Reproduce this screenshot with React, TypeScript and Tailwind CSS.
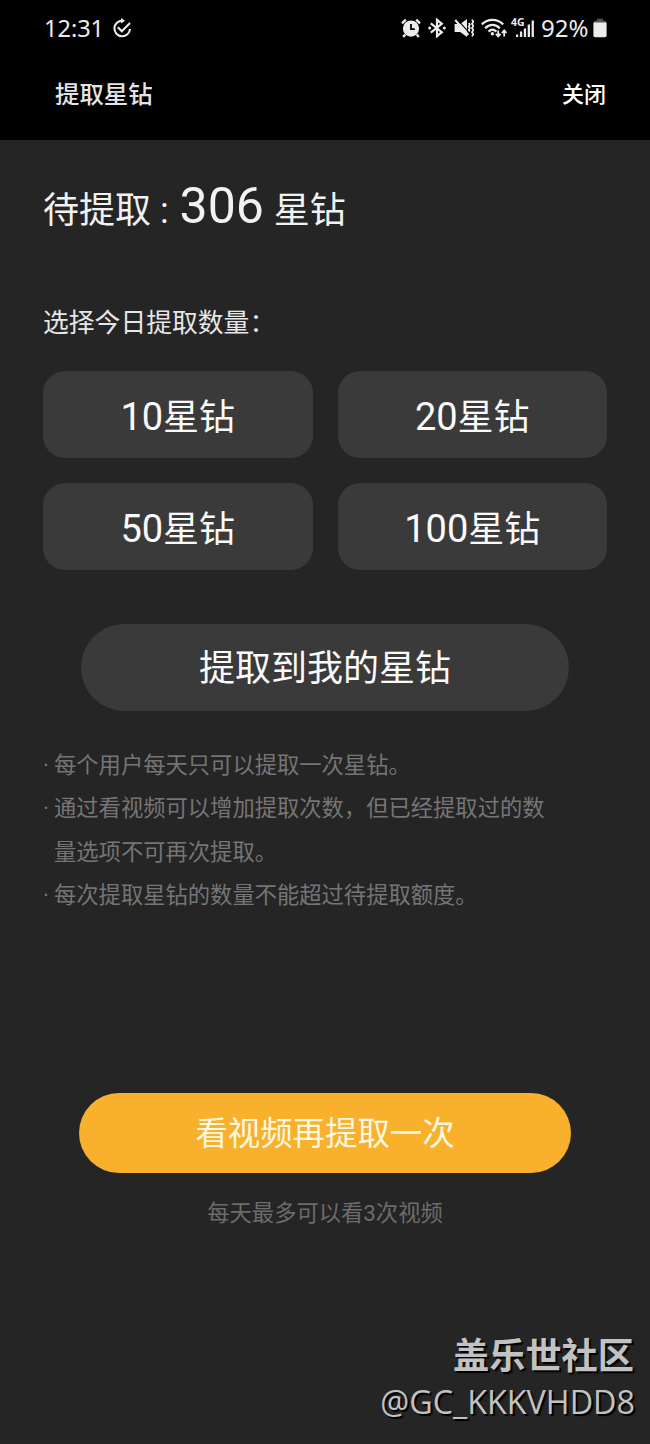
import { useState } from "react";

interface AmountButtonProps {
  amount: number;
  onClick: () => void;
}

const AMOUNTS = [10, 20, 50, 100];

const NOTES = [
  "每个用户每天只可以提取一次星钻。",
  "通过看视频可以增加提取次数，但已经提取过的数量选项不可再次提取。",
  "每次提取星钻的数量不能超过待提取额度。",
];

function SyncIcon() {
  return (
    <svg className="h-5 w-5" viewBox="0 0 20 20" fill="none" stroke="currentColor" strokeWidth={2.1}>
      <path d="M10.5 2.7A7.8 7.8 0 1 0 18 11" />
      <path d="M9 0l4 2.7L9 5.4z" fill="currentColor" stroke="none" />
      <path d="M5.8 9.2l4 4L18 5" />
    </svg>
  );
}

function AlarmIcon() {
  return (
    <svg className="h-5 w-5" viewBox="0 0 20 20">
      <circle cx="10" cy="10.6" r="8.1" fill="currentColor" />
      <path
        d="M1 5.4L4.8 1.6M19 5.4L15.2 1.6M4.2 16.4L2.2 19M15.8 16.4l2 2.6"
        stroke="currentColor"
        strokeWidth={2.4}
      />
      <path d="M10 6v5.2h3.8" fill="none" stroke="#000" strokeWidth={1.8} />
    </svg>
  );
}

function BluetoothIcon() {
  return (
    <svg className="h-5 w-[18px]" viewBox="0 0 18 20" fill="none" stroke="currentColor" strokeWidth={2.2}>
      <path d="M2.8 5.4l11 8.8L9 18.2V1.8l4.8 4L2.8 14.6" />
      <circle cx="1.7" cy="10" r="1.5" fill="currentColor" stroke="none" />
      <circle cx="16.3" cy="10" r="1.5" fill="currentColor" stroke="none" />
    </svg>
  );
}

function MuteIcon() {
  return (
    <svg className="h-5 w-5" viewBox="0 0 20 20" fill="none">
      <path d="M.6 6h5.6L13 1v18l-6.8-5H.6z" fill="currentColor" />
      <path d="M3.4 1.8l11.4 12.4" stroke="#000" strokeWidth={1.1} />
      <path d="M1.2 2l13.2 15" stroke="currentColor" strokeWidth={2} />
      <path
        d="M14.8 5l1 1.7-1 1.7 1 1.7-1 1.7 1 1.7M18 1.6l1.3 2.1L18 5.8l1.3 2.1L18 10l1.3 2.1-1.3 2.1 1.3 2.1-1.3 2.1"
        stroke="currentColor"
        strokeWidth={1.8}
      />
    </svg>
  );
}

function WifiIcon() {
  return (
    <svg className="h-5 w-[26px]" viewBox="0 0 26 20" fill="none" stroke="currentColor" strokeWidth={2.2}>
      <path d="M.8 6.4C7 .4 16 .4 22.2 6.4" />
      <path d="M4.2 10.2c4.2-4.4 10.4-4.4 14.6 0" />
      <path d="M7.6 13.6c2.4-2.4 5.4-2.4 7.8 0" />
      <circle cx="11.4" cy="15.8" r="1.7" fill="currentColor" stroke="none" />
      <path d="M17.2 12.6v6M14.9 15.8l2.3 2.6 2.3-2.6M23.2 18.4v-6M20.9 15l2.3-2.6 2.3 2.6" strokeWidth={1.8} />
    </svg>
  );
}

function SignalIcon() {
  return (
    <div className="relative h-5 w-[23px]">
      <span className="absolute top-0 left-0 font-['Noto_Sans',sans-serif] text-[10.5px] leading-[9px] font-bold">4G</span>
      <svg className="h-5 w-[23px]" viewBox="0 0 23 20" fill="currentColor">
        <path d="M5 16.4h2.2V19H5zM8.9 13.6h2.3V19H8.9zM12.8 10.4h2.3V19h-2.3zM16.7 6.6H19V19h-2.3zM20.6 2.6h2.3V19h-2.3z" />
      </svg>
    </div>
  );
}

function BatteryIcon() {
  return (
    <svg className="h-5 w-[14px]" viewBox="0 0 14 20">
      <path d="M4 .8h6v2h3v3H1v-3h3z" fill="#555" />
      <path d="M.4 4.6h13.2v12.8a1.8 1.8 0 0 1-1.8 1.8H2.2a1.8 1.8 0 0 1-1.8-1.8z" fill="currentColor" />
    </svg>
  );
}

function StatusBar() {
  return (
    <div className="flex h-14 items-center justify-between pr-[43px] pl-11 text-[#ececec]">
      <div className="flex items-center">
        <span className="w-[68px] font-['Noto_Sans',sans-serif] text-[23.5px] leading-6">12:31</span>
        <SyncIcon />
      </div>
      <div className="flex items-center">
        <AlarmIcon />
        <div className="ml-[7px]"><BluetoothIcon /></div>
        <div className="ml-2"><MuteIcon /></div>
        <div className="ml-[7px]"><WifiIcon /></div>
        <div className="ml-1"><SignalIcon /></div>
        <span className="ml-[7px] w-[52px] font-['Noto_Sans',sans-serif] text-[24px] leading-6">92%</span>
        <BatteryIcon />
      </div>
    </div>
  );
}

function AmountButton({ amount, onClick }: AmountButtonProps) {
  return (
    <button
      onClick={onClick}
      className="h-[87px] rounded-[22px] bg-[#3a3a3a] pt-[5px] text-[38px] leading-[44px] text-[#fafafa]"
    >
      {amount}
      <span className="text-[36px]">星钻</span>
    </button>
  );
}

export default function App() {
  const [selected, setSelected] = useState<number | null>(null);

  return (
    <div className="relative flex h-[1444px] w-[650px] flex-col overflow-hidden bg-[#252525] font-['Roboto','Noto_Sans_CJK_SC',sans-serif]">
      <header className="h-[140px] bg-black">
        <StatusBar />
        <div className="flex h-[77px] items-center justify-between pr-11 pl-[55px] font-medium">
          <h1 className="text-[24.4px] leading-9 text-[#e4e4e4]">提取星钻</h1>
          <button className="text-[22px] leading-9 text-white">关闭</button>
        </div>
      </header>

      <main className="flex flex-col px-[43px] pt-9">
        <div className="h-[60px] text-[36px] leading-[60px] whitespace-pre text-[#f2f2f2]">
          待提取 : <span className="ml-0.5 text-[50px]">306</span><span className="ml-px"> 星钻</span>
        </div>

        <div className="mt-[68px] text-[25.8px] leading-[38px] text-[#e6e6e6]">选择今日提取数量：</div>

        <div className="mt-[29px] grid grid-cols-2 gap-[25px]">
          {AMOUNTS.map((amount) => (
            <AmountButton key={amount} amount={amount} onClick={() => setSelected(amount)} />
          ))}
        </div>

        <button
          disabled={selected === null}
          className="mx-[38px] mt-[54px] h-[87px] rounded-full bg-[#3a3a3a] pt-0.5 text-[36px] leading-[44px] text-[#fafafa]"
        >
          提取到我的星钻
        </button>

        <ul className="mt-[33px] w-[510px] text-[22.3px] leading-[43.4px] text-[#757575]">
          {NOTES.map((note) => (
            <li key={note} className="flex">
              <span className="w-[11px] shrink-0">·</span>
              <span>{note}</span>
            </li>
          ))}
        </ul>

        <button className="mx-9 mt-[175px] h-20 rounded-full bg-[#f9b02c] pt-0.5 text-[32.4px] leading-10 text-[#fff8e0]">
          看视频再提取一次
        </button>
        <p className="mt-[23px] text-center text-[22.3px] leading-[34px] text-[#6c6c6c]">每天最多可以看3次视频</p>
      </main>

      {/* community watermark */}
      <div className="absolute right-[15px] bottom-0 flex h-[112px] flex-col items-end text-[#c2c2c2] [text-shadow:2px_2px_1px_#000]">
        <div className="mr-px text-[36.2px] leading-[50px] font-bold">盖乐世社区</div>
        <div className="font-['Open_Sans',sans-serif] text-[32.3px] leading-[38px]">@GC_KKKVHDD8</div>
      </div>
    </div>
  );
}
